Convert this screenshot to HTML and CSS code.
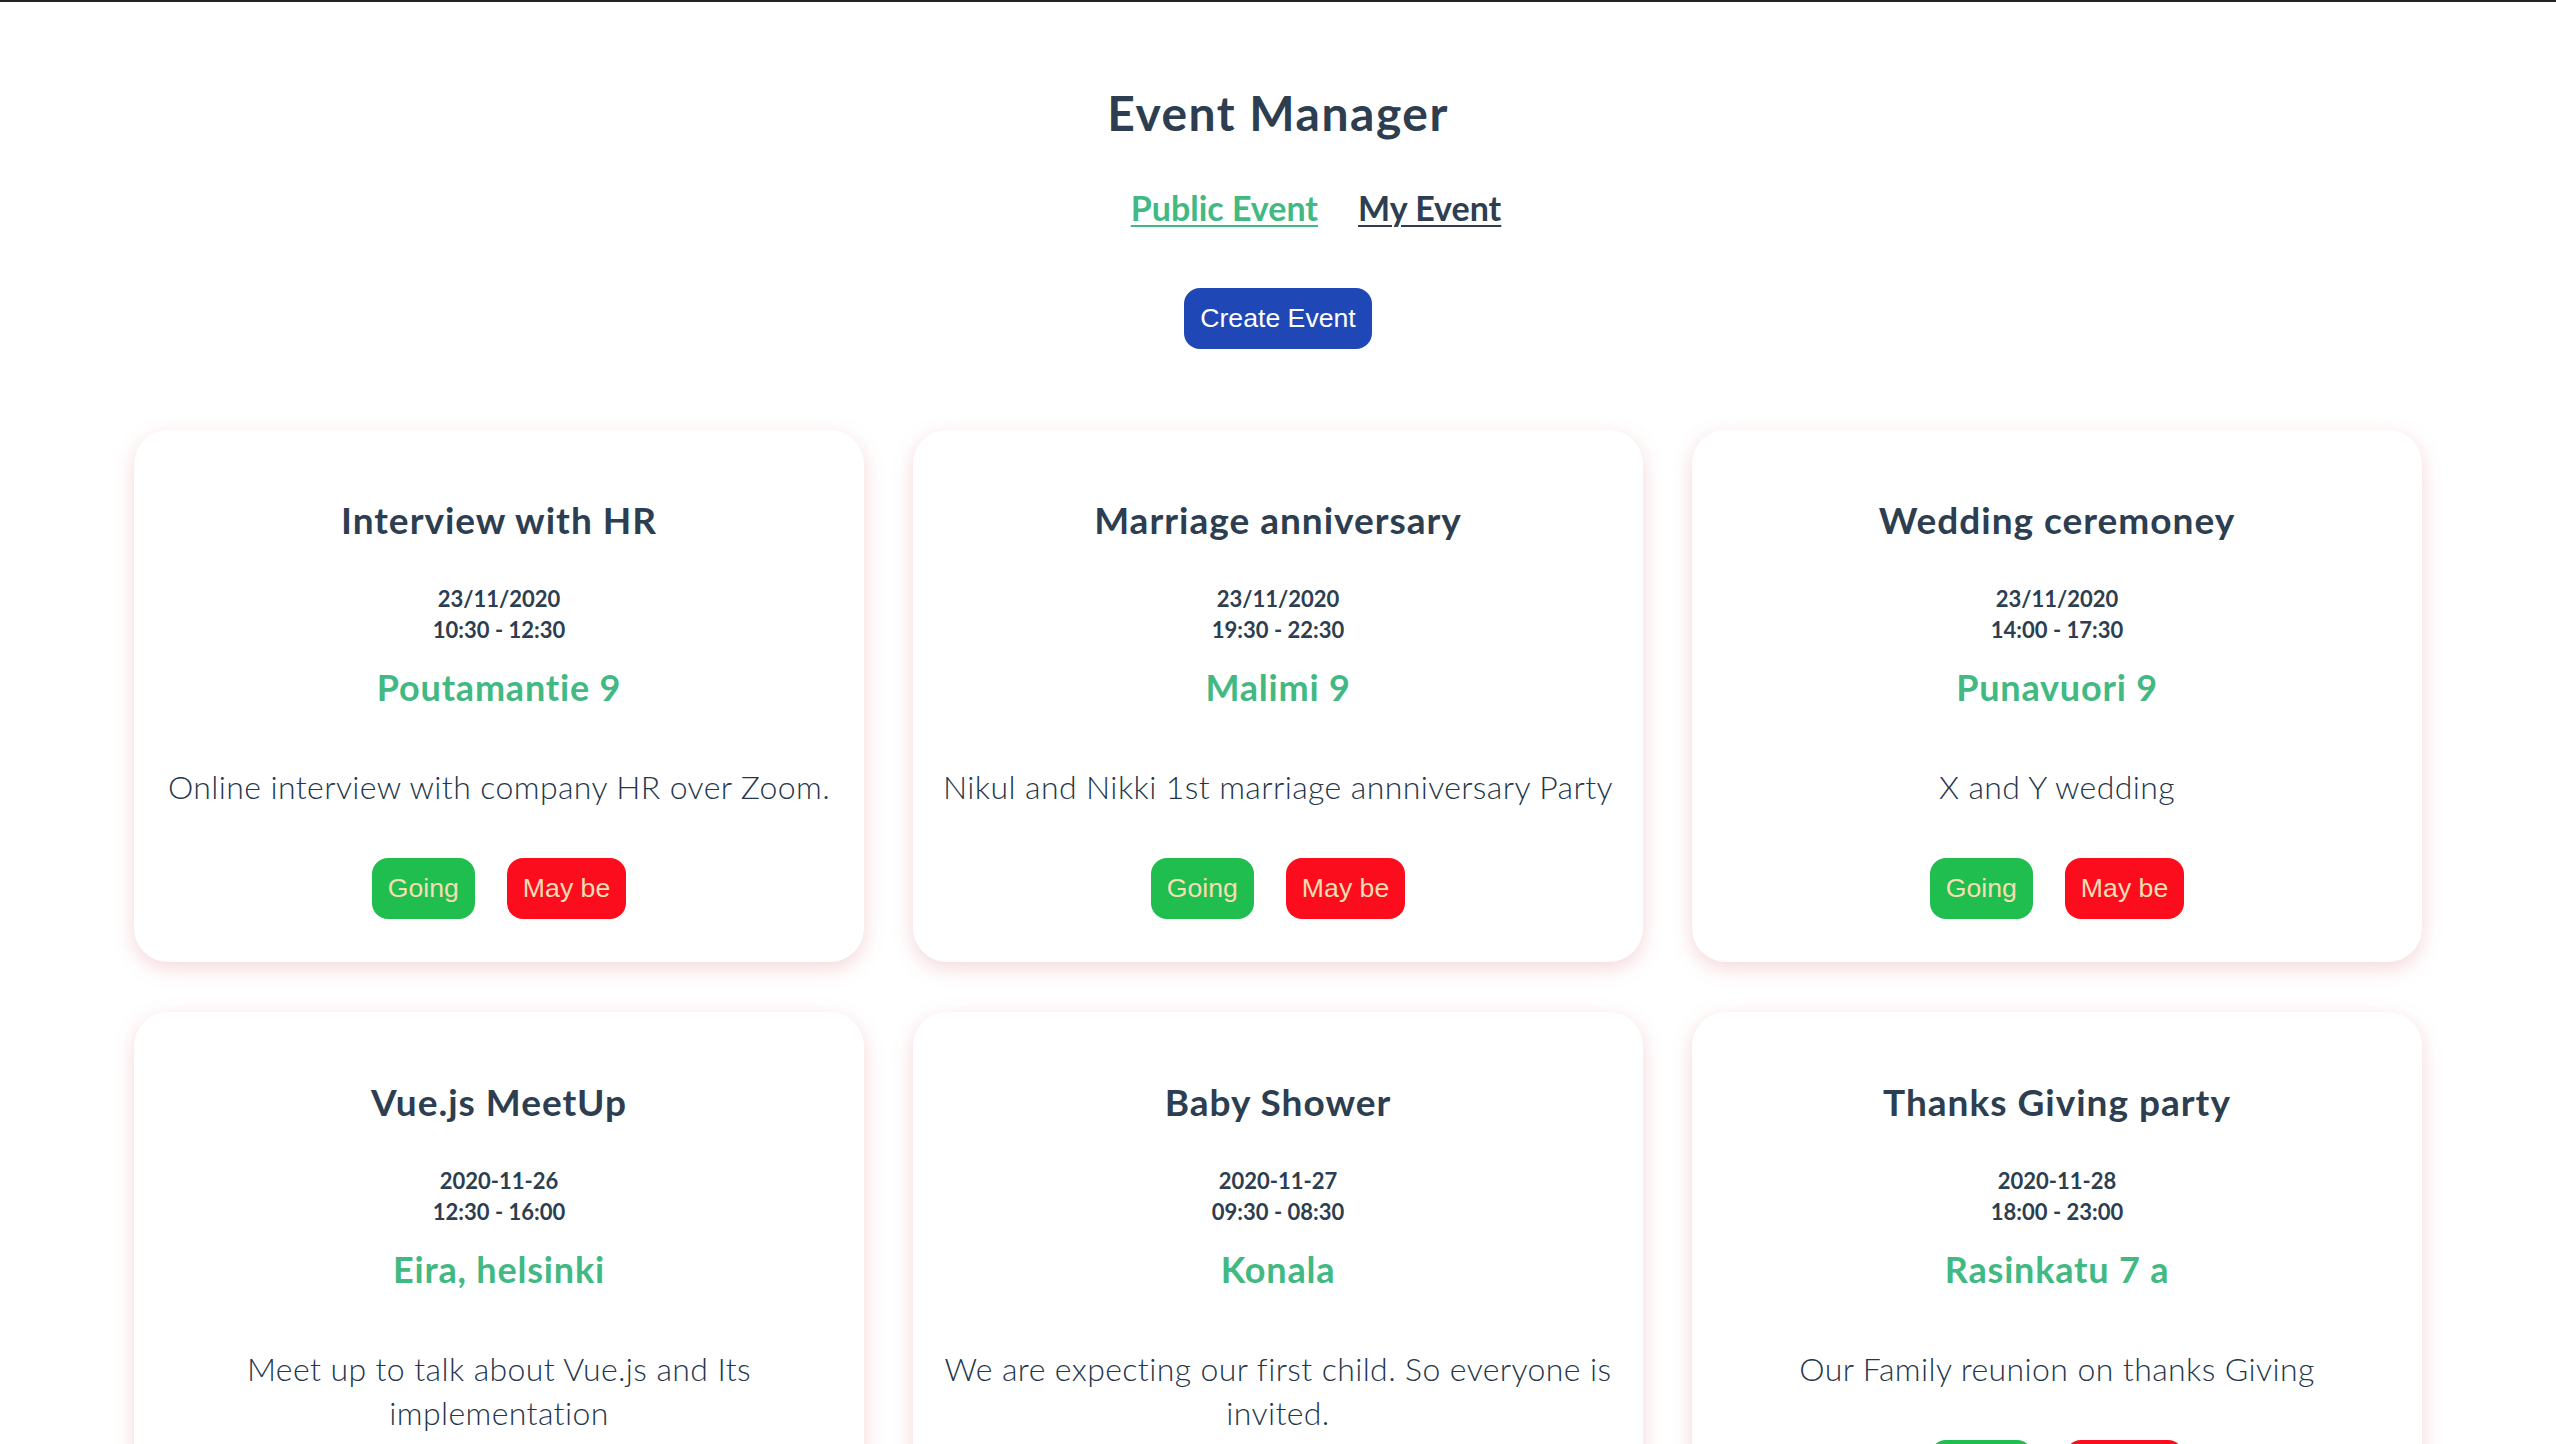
FILE: index.html
```html
<!DOCTYPE html>
<html lang="en">
<head>
<meta charset="utf-8">
<title>Event Manager</title>
<link rel="stylesheet" href="styles.css">
</head>
<body>
<div class="app">
  <h1 class="page-title">Event Manager</h1>
  <nav class="tabs">
    <a class="tab tab-active" href="#">Public Event</a>
    <a class="tab" href="#">My Event</a>
  </nav>
  <button class="create-btn">Create Event</button>

  <div class="events">
    <div class="card">
      <h3 class="card-title">Interview with HR</h3>
      <div class="card-when">23/11/2020<br>10:30 - 12:30</div>
      <h3 class="card-place">Poutamantie 9</h3>
      <p class="card-desc">Online interview with company HR over Zoom.</p>
      <div class="card-actions">
        <button class="rsvp rsvp-going">Going</button>
        <button class="rsvp rsvp-maybe">May be</button>
      </div>
    </div>
    <div class="card">
      <h3 class="card-title">Marriage anniversary</h3>
      <div class="card-when">23/11/2020<br>19:30 - 22:30</div>
      <h3 class="card-place">Malimi 9</h3>
      <p class="card-desc">Nikul and Nikki 1st marriage annniversary Party</p>
      <div class="card-actions">
        <button class="rsvp rsvp-going">Going</button>
        <button class="rsvp rsvp-maybe">May be</button>
      </div>
    </div>
    <div class="card">
      <h3 class="card-title">Wedding ceremoney</h3>
      <div class="card-when">23/11/2020<br>14:00 - 17:30</div>
      <h3 class="card-place">Punavuori 9</h3>
      <p class="card-desc">X and Y wedding</p>
      <div class="card-actions">
        <button class="rsvp rsvp-going">Going</button>
        <button class="rsvp rsvp-maybe">May be</button>
      </div>
    </div>
    <div class="card">
      <h3 class="card-title">Vue.js MeetUp</h3>
      <div class="card-when">2020-11-26<br>12:30 - 16:00</div>
      <h3 class="card-place">Eira, helsinki</h3>
      <p class="card-desc">Meet up to talk about Vue.js and Its implementation</p>
      <div class="card-actions">
        <button class="rsvp rsvp-going">Going</button>
        <button class="rsvp rsvp-maybe">May be</button>
      </div>
    </div>
    <div class="card">
      <h3 class="card-title">Baby Shower</h3>
      <div class="card-when">2020-11-27<br>09:30 - 08:30</div>
      <h3 class="card-place">Konala</h3>
      <p class="card-desc">We are expecting our first child. So everyone is invited.</p>
      <div class="card-actions">
        <button class="rsvp rsvp-going">Going</button>
        <button class="rsvp rsvp-maybe">May be</button>
      </div>
    </div>
    <div class="card">
      <h3 class="card-title">Thanks Giving party</h3>
      <div class="card-when">2020-11-28<br>18:00 - 23:00</div>
      <h3 class="card-place">Rasinkatu 7 a</h3>
      <p class="card-desc">Our Family reunion on thanks Giving</p>
      <div class="card-actions">
        <button class="rsvp rsvp-going">Going</button>
        <button class="rsvp rsvp-maybe">May be</button>
      </div>
    </div>
  </div>
</div>
</body>
</html>
```

FILE: styles.css
```css
html, body {
  margin: 0;
  padding: 0;
  background: #ffffff;
}

body {
  border-top: 2px solid #222222;
}

.app {
  font-family: Lato, "Noto Sans", sans-serif;
  color: #2c3e50;
  text-align: center;
  display: flex;
  flex-direction: column;
  align-items: center;
}

.page-title {
  margin: 82px 0 0;
  font-size: 48px;
  line-height: 57.6px;
  font-weight: 700;
  letter-spacing: 1.5px;
}

.tabs {
  margin-top: 46px;
  padding-left: 76px;
  display: flex;
  gap: 40px;
}

.tab {
  font-size: 34px;
  line-height: 40.8px;
  font-weight: 700;
  color: #2c3e50;
  text-decoration: underline;
  text-decoration-thickness: 2px;
  text-underline-offset: 4px;
}

.tab-active {
  color: #42b983;
}

.create-btn {
  margin-top: 60px;
  font-family: "Liberation Sans", Arial, sans-serif;
  font-size: 26.67px;
  line-height: 31px;
  padding: 15px 16px;
  border: none;
  border-radius: 16px;
  background: #1f47b5;
  color: #ffffff;
}

.events {
  margin-top: 81px;
  display: grid;
  grid-template-columns: repeat(3, 730px);
  column-gap: 49px;
  row-gap: 50px;
  justify-content: center;
  width: 100%;
}

.card {
  background: #ffffff;
  border-radius: 34px;
  box-shadow: 0 6px 20px rgba(220, 110, 120, 0.28);
  padding: 0 20px 43px;
  display: flex;
  flex-direction: column;
  align-items: center;
}

.card-title {
  margin: 68px 0 0;
  font-size: 37px;
  line-height: 44.4px;
  font-weight: 700;
  letter-spacing: 1px;
}

.card-when {
  margin-top: 41px;
  font-size: 22px;
  line-height: 30.7px;
  font-weight: 700;
}

.card-place {
  margin: 21px 0 0;
  font-size: 36px;
  line-height: 43.2px;
  font-weight: 700;
  letter-spacing: 0.8px;
  color: #42b983;
}

.card-desc {
  margin: 56px 0 0;
  font-size: 32px;
  line-height: 44px;
  font-weight: 300;
  letter-spacing: 0.4px;
  color: #24364a;
}

.card-actions {
  margin-top: 49px;
  display: flex;
  gap: 32px;
  justify-content: center;
}

.rsvp {
  font-family: "Liberation Sans", Arial, sans-serif;
  font-size: 26.67px;
  line-height: 31px;
  padding: 15px 16px;
  border: none;
  border-radius: 16px;
  color: #f5deb3;
}

.rsvp-going {
  background: #20bd4f;
}

.rsvp-maybe {
  background: #fb0d1d;
}
```
